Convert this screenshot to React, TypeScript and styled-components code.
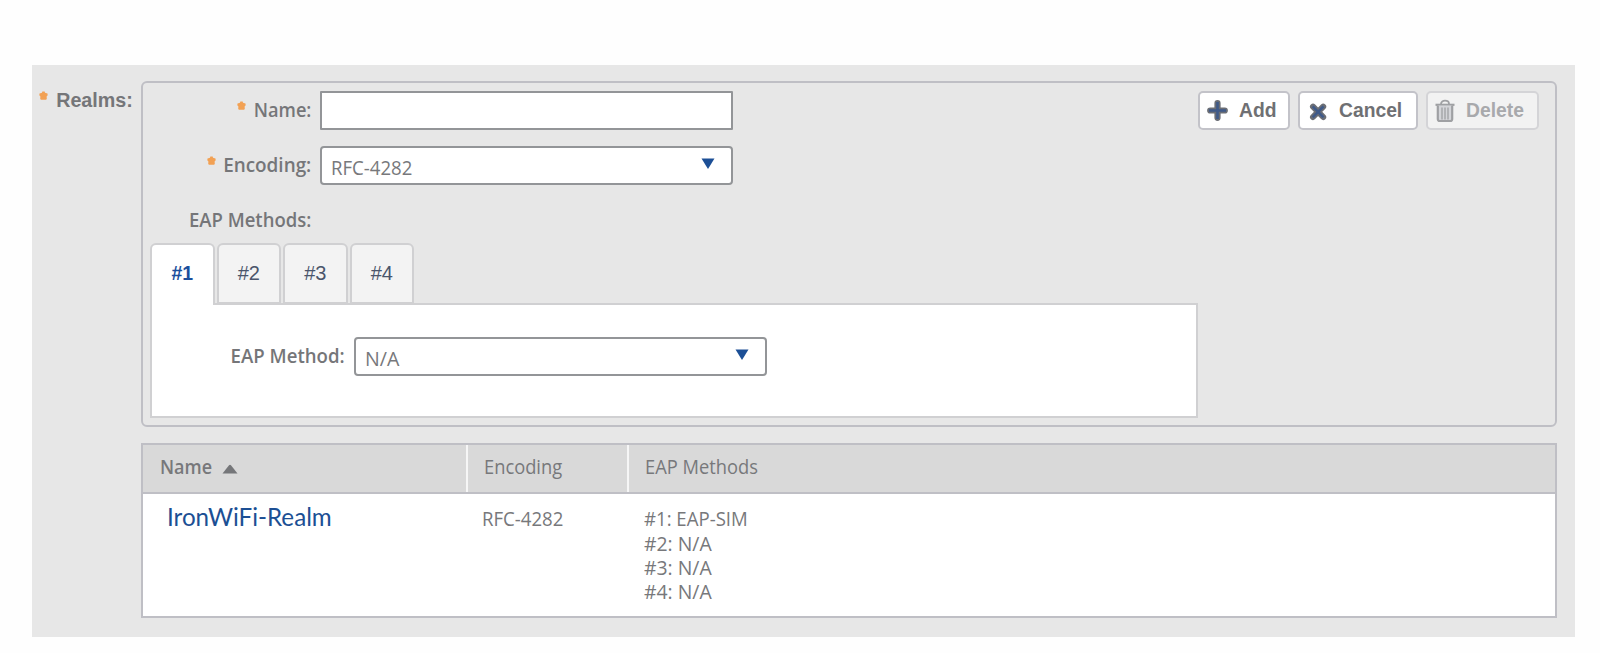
import React from "react";
import styled, { createGlobalStyle } from "styled-components";

const GlobalStyle = createGlobalStyle`
  * { box-sizing: border-box; }
  body {
    margin: 0;
    background: #fefefe;
    font-family: "Open Sans", "Liberation Sans", sans-serif;
    font-size: 20px;
    line-height: 24px;
    color: #757679;
  }
`;

const Page = styled.main`
  display: flex;
  height: 653px;
  padding: 65px 25px 16px 32px;
`;

const Panel = styled.section`
  display: flex;
  flex: 1;
  background: #e7e7e7;
  padding: 16px 18px 19px 0;
`;

const Side = styled.div`
  display: flex;
  width: 109px;
  padding: 7px 8px 0 0;
  justify-content: flex-end;
`;

const Main = styled.div`
  display: flex;
  flex-direction: column;
  flex: 1;
  gap: 16px;
`;

const Label = styled.label<{ $squeeze?: number; $sans?: boolean }>`
  font-family: ${(p) => (p.$sans ? '"Liberation Sans", sans-serif' : "inherit")};
  font-weight: 600;
  font-size: 20px;
  transform: scaleX(${(p) => p.$squeeze ?? 0.915});
  transform-origin: right center;
  white-space: nowrap;
`;

const Star = styled.svg`
  width: 9px;
  height: 9px;
  flex: none;
  fill: #f2a154;
`;

const Required = styled.span<{ $gap: number }>`
  display: flex;
  align-items: flex-start;
  gap: ${(p) => p.$gap}px;
  svg { margin-top: 3px; }
`;

const Form = styled.fieldset`
  position: relative;
  display: flex;
  flex-direction: column;
  margin: 0;
  min-width: 0;
  height: 347px;
  padding: 8px 0 0 7px;
  border: 2px solid #bfbfc5;
  border-radius: 6px;
`;

const TopRow = styled.div`
  display: flex;
  justify-content: space-between;
  padding-right: 16px;
`;

const Fields = styled.div`
  display: flex;
  flex-direction: column;
  gap: 16px;
`;

const Field = styled.div`
  display: grid;
  grid-template-columns: 161px 413px;
  column-gap: 9px;
  height: 39px;
`;

const FieldLabel = styled.div`
  display: flex;
  justify-content: flex-end;
  padding-top: 7px;
`;

const TextInput = styled.input`
  width: 413px;
  height: 39px;
  padding: 0 10px;
  border: 2px solid #939598;
  border-radius: 1px;
  background: #fff;
  font: inherit;
`;

const SelectBox = styled.div`
  display: flex;
  justify-content: space-between;
  width: 413px;
  height: 39px;
  padding: 8px 16px 0 9px;
  border: 2px solid #939598;
  border-radius: 4px;
  background: #fff;
`;

const Value = styled.span<{ $squeeze?: number }>`
  display: inline-block;
  transform: scaleX(${(p) => p.$squeeze ?? 0.915});
  transform-origin: left center;
  color: #77787b;
  white-space: nowrap;
`;

const Arrow = styled.svg`
  width: 14px;
  height: 12px;
  margin-top: 2px;
  fill: #1c4f96;
`;

const Buttons = styled.div`
  display: flex;
  gap: 8px;
  height: 39px;
`;

const Button = styled.button<{ $width: number }>`
  display: flex;
  align-items: center;
  width: ${(p) => p.$width}px;
  height: 39px;
  padding: 0 0 0 7px;
  border: 2px solid #c3c3c9;
  border-radius: 5px;
  background: #fff;
  font: bold 19.3px/24px "Liberation Sans", Arial, sans-serif;
  color: #6f7073;
  &:disabled {
    border-color: #d4d4d7;
    background: #f2f2f2;
    color: #a8a9ac;
  }
`;

const IconSlot = styled.i<{ $before?: number; $after: number }>`
  display: flex;
  flex: none;
  margin: 0 ${(p) => p.$after}px 0 ${(p) => p.$before ?? 0}px;
  svg { width: 22px; height: 24px; }
`;

const Tabs = styled.div`
  display: flex;
  gap: 2px;
  margin: 3px 0 -2px;
  position: relative;
`;

const Tab = styled.button<{ $active?: boolean }>`
  width: 64.5px;
  height: ${(p) => (p.$active ? 62 : 61)}px;
  padding: 0 0 ${(p) => (p.$active ? 4 : 0)}px 0;
  border: 2px solid #d0d0d2;
  border-bottom: ${(p) => (p.$active ? "0" : "2px solid #d0d0d2")};
  border-radius: 6px 6px 0 0;
  background: ${(p) => (p.$active ? "#fff" : "#f3f3f3")};
  color: ${(p) => (p.$active ? "#1c4f9c" : "#4a556b")};
  font: ${(p) => (p.$active ? "bold 19.5px" : "20px")} "Liberation Sans", Arial, sans-serif;
`;

const TabPanel = styled.div`
  display: grid;
  grid-template-columns: 193px 413px;
  column-gap: 9px;
  width: 1048px;
  height: 115px;
  padding-top: 32px;
  border: 2px solid #d0d0d2;
  background: #fff;
`;

const Table = styled.table`
  width: 100%;
  height: 175px;
  border: 2px solid #bfbfc5;
  border-collapse: separate;
  border-spacing: 0;
  background: #fff;
  table-layout: fixed;
`;

const Th = styled.th<{ $width?: number }>`
  width: ${(p) => (p.$width ? `${p.$width}px` : "auto")};
  height: 49px;
  padding: 0 0 3px 16px;
  border-bottom: 2px solid #bfbfc5;
  background: #d9d9d9 ${(p) => (p.$width ? "linear-gradient(#f6f6f6, #f6f6f6) right top / 2px 100% no-repeat" : "")};
  font-weight: 400;
  text-align: left;
`;

const Sorted = styled.span`
  display: flex;
  align-items: center;
  gap: 4px;
  padding-left: 1px;
  svg { width: 16px; height: 10px; margin-top: 3px; fill: #757679; }
`;

const SortedName = styled(Value)`
  font-weight: 600;
`;

const Td = styled.td<{ $left: number }>`
  padding: 13px 0 0 ${(p) => p.$left}px;
  vertical-align: top;
`;

const RealmLink = styled.a`
  display: block;
  margin-top: -2px;
  font-family: Lato, sans-serif;
  font-size: 24.2px;
  color: #1c4f94;
`;

const Methods = styled.ul`
  display: flex;
  flex-direction: column;
  gap: 0.2px;
  margin: 0;
  padding: 0;
  list-style: none;
`;

const Asterisk = () => (
  <Star viewBox="0 0 9 9">
    <path d="M3.3.4h2.4l.3 1.3 2.5.7.2 1.8-1.100 1.200.2 2.600-.8.7H2l-.8-.7.2-2.600L.3 4.200l.2-1.800L3 1.700z" />
  </Star>
);

const Select = ({ value, squeeze }: { value: string; squeeze?: number }) => (
  <SelectBox>
    <Value $squeeze={squeeze}>{value}</Value>
    <Arrow viewBox="0 0 14 12">
      <path d="M.5.5h13L7 11z" />
    </Arrow>
  </SelectBox>
);

const PlusIcon = () => (
  <svg viewBox="0 0 22 24">
    <path d="M10.500 4.200v14.600M3.200 11.500h14.600" stroke="#6b6e75" strokeWidth="6.2" strokeLinecap="round" />
    <path d="M10.500 3v17M2 11.500h17" stroke="#3f5a89" strokeWidth="2.6" />
  </svg>
);

const CrossIcon = () => (
  <svg viewBox="0 0 22 24">
    <path d="M5 7.600l10.200 10.400M15.200 7.600L5 18" stroke="#6b6e75" strokeWidth="6" strokeLinecap="round" />
    <path d="M4.700 7.300l10.800 11M15.500 7.300l-10.800 11" stroke="#3f5a89" strokeWidth="2.6" />
  </svg>
);

const TrashIcon = () => (
  <svg viewBox="0 0 22 24" fill="none" stroke="#9fa0a3">
    <path d="M7 5C7 .6 15 .6 15 5" strokeWidth="1.8" />
    <path d="M1.500 5.800h19" strokeWidth="2.2" />
    <path d="M3.800 6.500v13.500q0 2 2 2h10.400q2 0 2-2V6.500" fill="#d4d5d9" strokeWidth="2.2" />
    <path d="M8 8.500v12M11 8.500v12M14 8.500v12" strokeWidth="1.3" />
  </svg>
);

const methods = ["#1: EAP-SIM", "#2: N/A", "#3: N/A", "#4: N/A"];

export default function App() {
  return (
    <>
      <GlobalStyle />
      <Page>
        <Panel>
          <Side>
            <Required $gap={7}>
              <Asterisk />
              <Label $sans $squeeze={0.985}>Realms:</Label>
            </Required>
          </Side>
          <Main>
            <Form>
              <TopRow>
                <Fields>
                  <Field>
                    <FieldLabel>
                      <Required $gap={2}>
                        <Asterisk />
                        <Label $squeeze={0.91}>Name:</Label>
                      </Required>
                    </FieldLabel>
                    <TextInput />
                  </Field>
                  <Field>
                    <FieldLabel>
                      <Required $gap={2}>
                        <Asterisk />
                        <Label $squeeze={0.945}>Encoding:</Label>
                      </Required>
                    </FieldLabel>
                    <Select value="RFC-4282" squeeze={0.93} />
                  </Field>
                  <Field>
                    <FieldLabel>
                      <Label $squeeze={0.925}>EAP Methods:</Label>
                    </FieldLabel>
                  </Field>
                </Fields>
                <Buttons>
                  <Button $width={92}>
                    <IconSlot $after={10}><PlusIcon /></IconSlot>
                    <span>Add</span>
                  </Button>
                  <Button $width={120}>
                    <IconSlot $after={9} $before={1}><CrossIcon /></IconSlot>
                    <span>Cancel</span>
                  </Button>
                  <Button $width={113} disabled>
                    <IconSlot $after={10} $before={-1}><TrashIcon /></IconSlot>
                    <span>Delete</span>
                  </Button>
                </Buttons>
              </TopRow>
              <Tabs>
                <Tab $active>#1</Tab>
                <Tab>#2</Tab>
                <Tab>#3</Tab>
                <Tab>#4</Tab>
              </Tabs>
              <TabPanel>
                <FieldLabel>
                  <Label $squeeze={0.93}>EAP Method:</Label>
                </FieldLabel>
                <Select value="N/A" squeeze={0.98} />
              </TabPanel>
            </Form>
            <Table>
              <thead>
                <tr>
                  <Th $width={325}>
                    <Sorted>
                      <SortedName $squeeze={0.9}>Name</SortedName>
                      <svg viewBox="0 0 16 10"><path d="M.5 9.500L7 1.200q1-.9 2 0L15.500 9.500z" /></svg>
                    </Sorted>
                  </Th>
                  <Th $width={161}><Value>Encoding</Value></Th>
                  <Th><Value>EAP Methods</Value></Th>
                </tr>
              </thead>
              <tbody>
                <tr>
                  <Td $left={24}><RealmLink>IronWiFi-Realm</RealmLink></Td>
                  <Td $left={14}><Value $squeeze={0.93}>RFC-4282</Value></Td>
                  <Td $left={15}>
                    <Methods>
                      {methods.map((m) => <li key={m}><Value $squeeze={m.endsWith("N/A") ? 0.97 : 0.93}>{m}</Value></li>)}
                    </Methods>
                  </Td>
                </tr>
              </tbody>
            </Table>
          </Main>
        </Panel>
      </Page>
    </>
  );
}
